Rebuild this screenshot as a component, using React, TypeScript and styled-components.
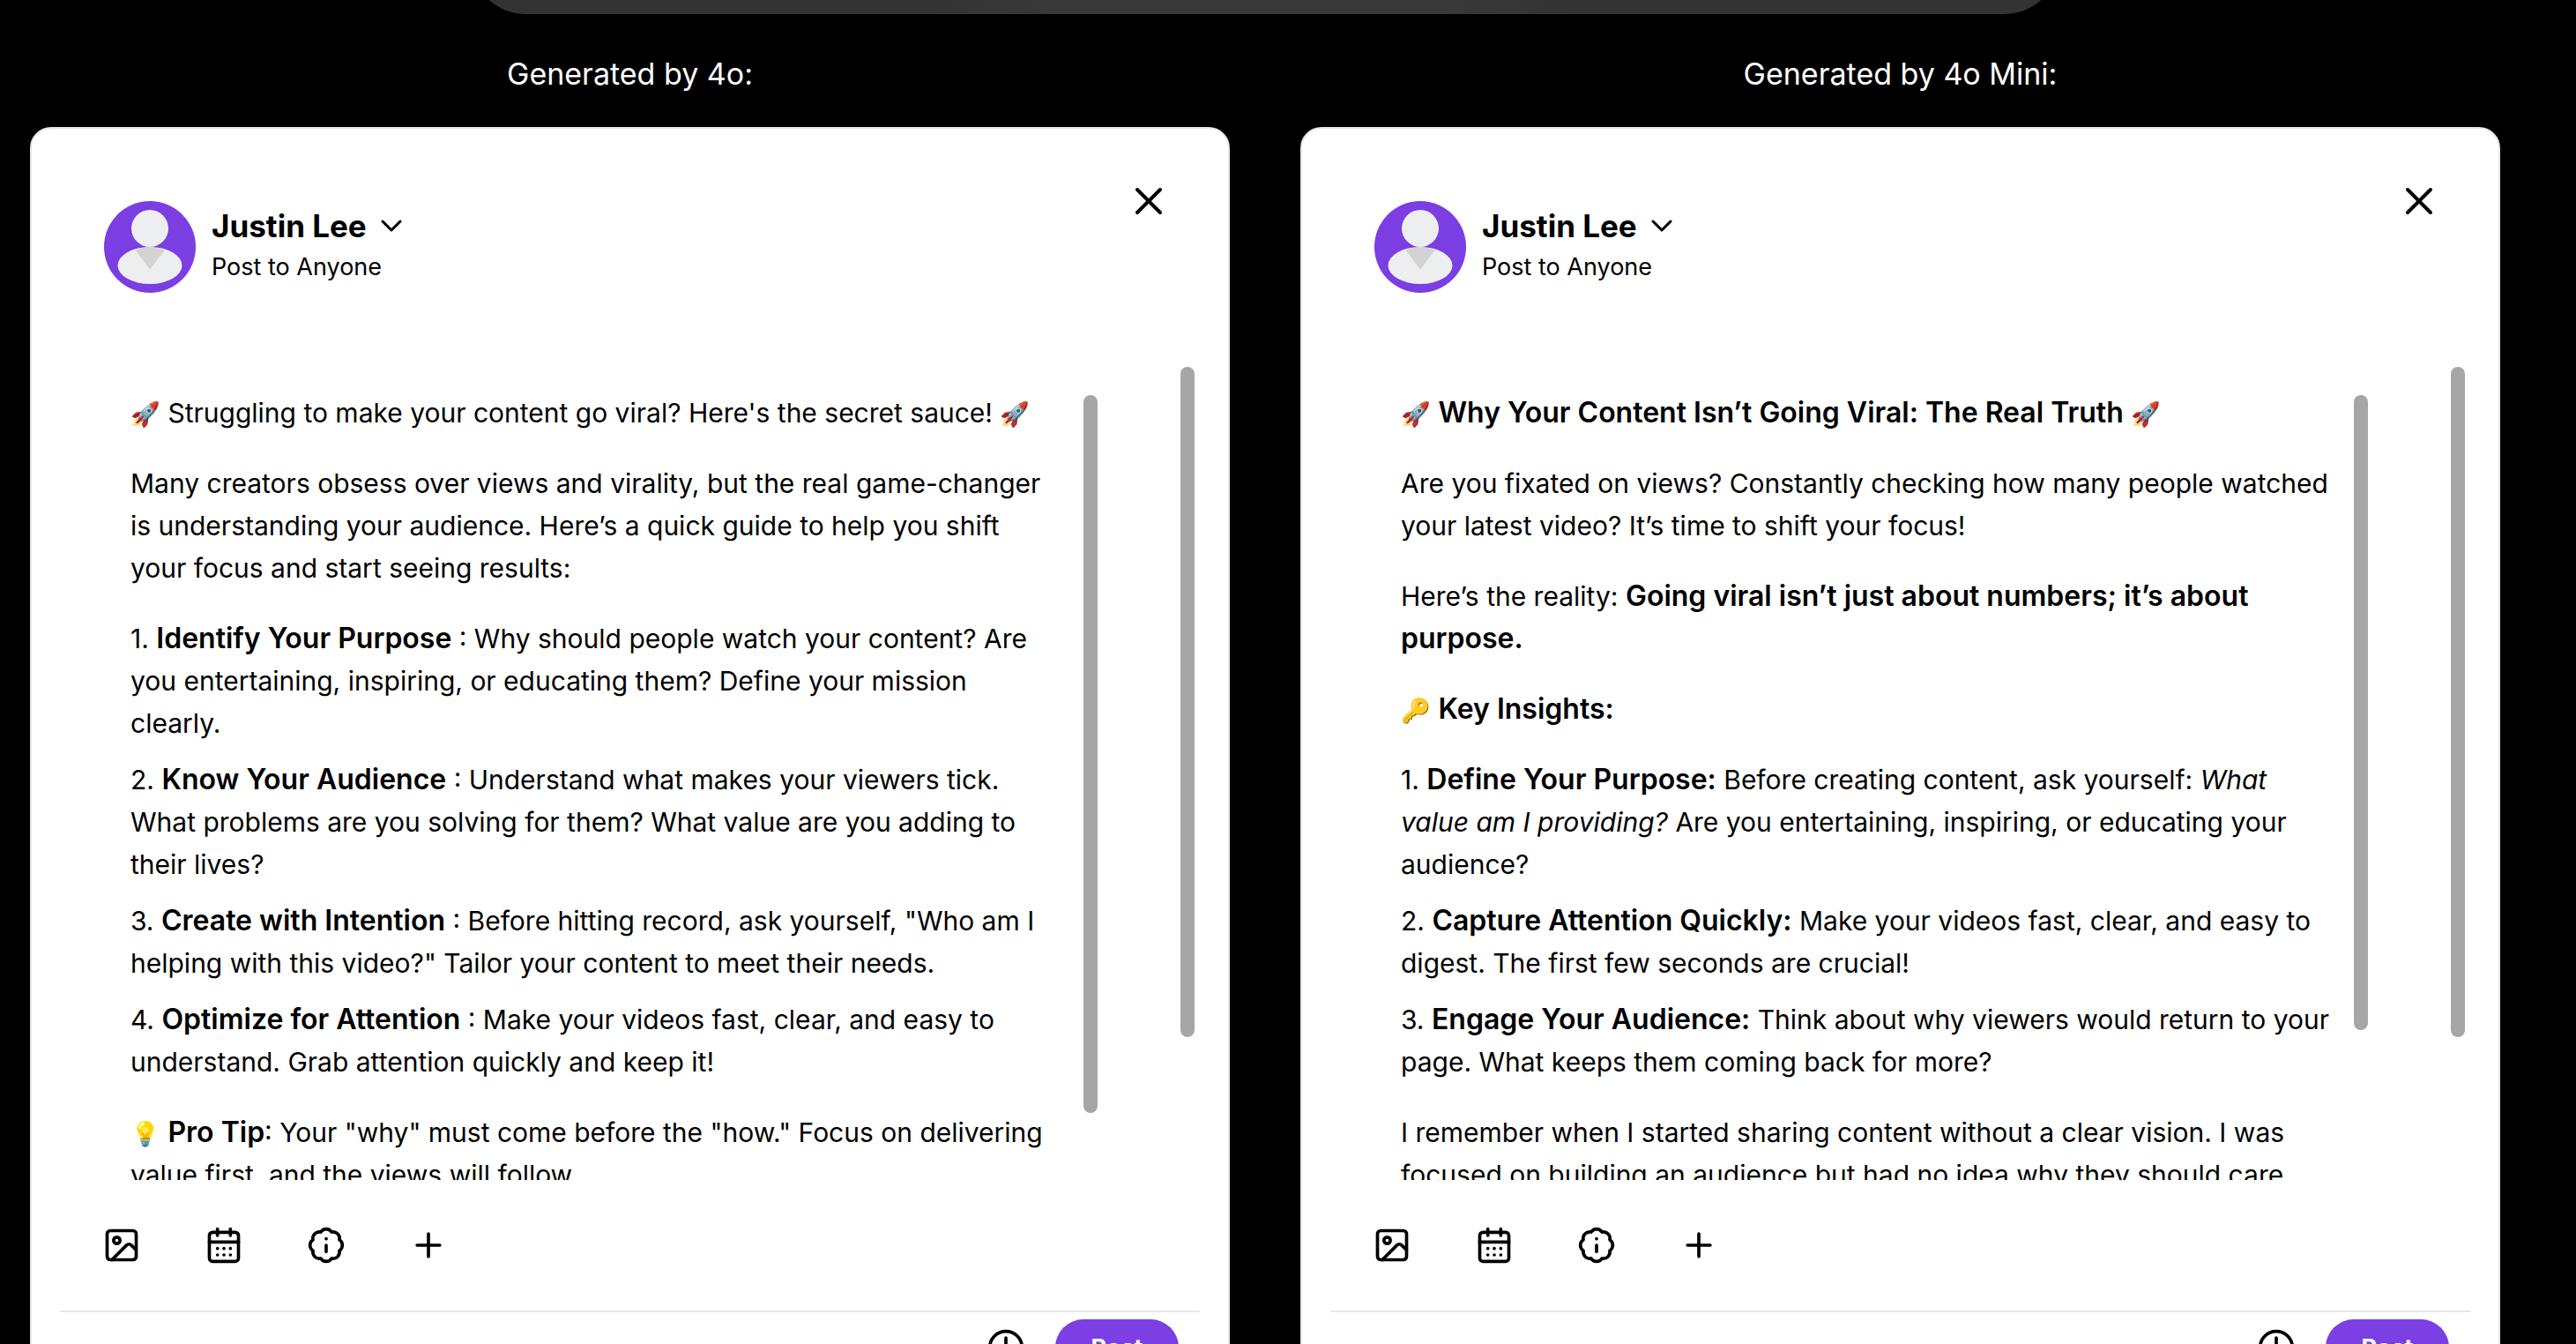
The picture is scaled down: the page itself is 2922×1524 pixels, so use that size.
import React from "react";
import styled, { createGlobalStyle } from "styled-components";
import { BadgeInfo, CalendarDays, Clock, Image, Plus } from "lucide-react";

const GlobalStyle = createGlobalStyle`
  * { box-sizing: border-box; }
  body {
    margin: 0;
    background: #000;
    color: #000;
    font-family: Inter, "Liberation Sans", sans-serif;
  }
  p, h2, ol { margin: 0; padding: 0; }
  button { font: inherit; color: inherit; border: 0; padding: 0; background: none; cursor: pointer; }
`;

const Page = styled.main`
  height: 100vh;
  overflow: hidden;
  display: flex;
  flex-direction: column;
  padding: 0 86px 0 34px;
`;

const PromptBar = styled.div`
  flex: none;
  align-self: center;
  width: 1804px;
  max-width: 100%;
  height: 16px;
  overflow: hidden;
  display: flex;
  align-items: flex-end;
`;

const PromptPill = styled.div`
  flex: 1;
  height: 128px;
  border-radius: 64px;
  background: linear-gradient(90deg, #333 28%, #393939 38%, #393939 60%, #333 70%);
`;

const Columns = styled.div`
  display: grid;
  grid-template-columns: 1fr 1fr;
  column-gap: 80px;
`;

const Column = styled.section`
  min-width: 0;
  padding-top: 40px;
`;

const Heading = styled.h2`
  color: #fff;
  font-size: 34px;
  line-height: 56px;
  font-weight: 400;
  text-align: center;
  margin-bottom: 32px;
`;

const Card = styled.article`
  background: #fff;
  border: 2px solid #e5e7eb;
  border-radius: 24px;
  padding: 32px;
`;

const Header = styled.header`
  display: flex;
  justify-content: space-between;
  align-items: flex-start;
  height: 234px;
  padding: 28px 36px 0 50px;
`;

const Author = styled.div`
  display: flex;
  gap: 18px;
  padding-top: 22px;
`;

const AuthorName = styled.button`
  display: flex;
  align-items: center;
  gap: 10px;
  font-size: 35px;
  line-height: 56px;
  font-weight: 700;
`;

const Audience = styled.p`
  font-size: 27px;
  line-height: 38px;
`;

const CloseButton = styled.button`
  display: flex;
  width: 44px;
  height: 44px;
`;

const Body = styled.div`
  display: flex;
  justify-content: space-between;
  height: 926px;
  padding: 0 6px 0 48px;
`;

const PostArea = styled.div`
  display: flex;
  width: 1129px;
  margin-top: 32px;
  padding-left: 32px;
  overflow: hidden;
`;

const PostText = styled.div`
  flex: 1;
  min-width: 0;
  margin-right: 26px;
  display: flex;
  flex-direction: column;
  gap: 32px;
  font-size: 30px;
  line-height: 48px;
`;

const Steps = styled.ol`
  display: flex;
  flex-direction: column;
  gap: 16px;
  list-style: none;
`;

const Strong = styled.strong`
  font-size: 32px;
  line-height: 1;
  font-weight: 600;
`;

const Emoji = styled.span`
  font-size: 27px;
  line-height: 1;
`;

const Thumb = styled.div<{ $length: number }>`
  flex: none;
  width: 16px;
  height: ${(p) => p.$length}px;
  margin-top: 4px;
  border-radius: 8px;
  background: #a6a6a6;
`;

const Tools = styled.div`
  display: flex;
  align-items: center;
  gap: 72px;
  height: 148px;
  padding-left: 48px;
`;

const IconButton = styled.button`
  display: flex;
`;

const Footer = styled.footer`
  display: flex;
  justify-content: flex-end;
  align-items: center;
  gap: 34px;
  border-top: 2px solid #e5e7eb;
  padding: 8px 24px 0 0;
`;

const PostButton = styled.button`
  width: 140px;
  height: 64px;
  border-radius: 32px;
  background: #7b3fe4;
  color: #fff;
  font-size: 27px;
  font-weight: 700;
`;

const Avatar = () => (
  <svg width="104" height="104" viewBox="0 0 104 104" aria-hidden="true">
    <circle cx="52" cy="52" r="52" fill="#7a3ee3" />
    <circle cx="52" cy="31" r="21" fill="#edeef0" />
    <ellipse cx="52" cy="73" rx="36.5" ry="21" fill="#edeef0" />
    <path d="M35.5 55.5Q52 49 69 55.5L52 77.500Z" fill="#d3d3d3" />
  </svg>
);

type Post = { title: string; body: React.ReactNode; thumb: number };

const posts: Post[] = [
  {
    title: "Generated by 4o:",
    thumb: 814,
    body: (
      <>
        <p>
          <Emoji>🚀</Emoji> Struggling to make your content go viral? Here's the secret sauce!{" "}
          <Emoji>🚀</Emoji>
        </p>
        <p>
          Many creators obsess over views and virality, but the real game-changer is
          understanding your audience. Here’s a quick guide to help you shift your focus and
          start seeing results:
        </p>
        <Steps>
          <li>
            1. <Strong>Identify Your Purpose</Strong> : Why should people watch your content?
            Are you entertaining, inspiring, or educating them? Define your mission clearly.
          </li>
          <li>
            2. <Strong>Know Your Audience</Strong> : Understand what makes your viewers tick.
            What problems are you solving for them? What value are you adding to their lives?
          </li>
          <li>
            3. <Strong>Create with Intention</Strong> : Before hitting record, ask yourself,
            "Who am I helping with this video?" Tailor your content to meet their needs.
          </li>
          <li>
            4. <Strong>Optimize for Attention</Strong> : Make your videos fast, clear, and easy
            to understand. Grab attention quickly and keep it!
          </li>
        </Steps>
        <p>
          <Emoji>💡</Emoji> <Strong>Pro Tip</Strong>: Your "why" must come before the "how."
          Focus on delivering value first, and the views will follow.
        </p>
      </>
    ),
  },
  {
    title: "Generated by 4o Mini:",
    thumb: 720,
    body: (
      <>
        <p>
          <Emoji>🚀</Emoji> <Strong>Why Your Content Isn’t Going Viral: The Real Truth</Strong>{" "}
          <Emoji>🚀</Emoji>
        </p>
        <p>
          Are you fixated on views? Constantly checking how many people watched your latest
          video? It’s time to shift your focus!
        </p>
        <p>
          Here’s the reality:{" "}
          <Strong>Going viral isn’t just about numbers; it’s about purpose.</Strong>
        </p>
        <p>
          <Emoji>🔑</Emoji> <Strong>Key Insights:</Strong>
        </p>
        <Steps>
          <li>
            1. <Strong>Define Your Purpose:</Strong> Before creating content, ask yourself:{" "}
            <em>What value am I providing?</em> Are you entertaining, inspiring, or educating
            your audience?
          </li>
          <li>
            2. <Strong>Capture Attention Quickly:</Strong> Make your videos fast, clear, and
            easy to digest. The first few seconds are crucial!
          </li>
          <li>
            3. <Strong>Engage Your Audience:</Strong> Think about why viewers would return to
            your page. What keeps them coming back for more?
          </li>
        </Steps>
        <p>
          I remember when I started sharing content without a clear vision. I was focused on
          building an audience but had no idea why they should care.
        </p>
      </>
    ),
  },
];

const PostCard = ({ post }: { post: Post }) => (
  <Column>
    <Heading>{post.title}</Heading>
    <Card>
      <Header>
        <Author>
          <Avatar />
          <div>
            <AuthorName type="button">
              Justin Lee
              <svg width="36" height="36" viewBox="0 0 36 36" fill="none" aria-hidden="true">
                <path d="M8 13L18 23L28 13" stroke="#000" strokeWidth="3" strokeLinecap="round" strokeLinejoin="round" />
              </svg>
            </AuthorName>
            <Audience>Post to Anyone</Audience>
          </div>
        </Author>
        <CloseButton type="button" aria-label="Close">
          <svg width="44" height="44" viewBox="0 0 44 44" fill="none" aria-hidden="true">
            <path d="M9 9L35 35M35 9L9 35" stroke="#000" strokeWidth="4" strokeLinecap="round" />
          </svg>
        </CloseButton>
      </Header>
      <Body>
        <PostArea>
          <PostText>{post.body}</PostText>
          <Thumb $length={post.thumb} />
        </PostArea>
        <Thumb $length={760} />
      </Body>
      <Tools>
        <IconButton type="button" aria-label="Add image"><Image size={44} /></IconButton>
        <IconButton type="button" aria-label="Add event"><CalendarDays size={44} /></IconButton>
        <IconButton type="button" aria-label="Celebrate"><BadgeInfo size={44} /></IconButton>
        <IconButton type="button" aria-label="More"><Plus size={44} /></IconButton>
      </Tools>
      <Footer>
        <IconButton type="button" aria-label="Schedule"><Clock size={44} /></IconButton>
        <PostButton type="button">Post</PostButton>
      </Footer>
    </Card>
  </Column>
);

export default function App() {
  return (
    <>
      <GlobalStyle />
      <Page>
        <PromptBar>
          <PromptPill />
        </PromptBar>
        <Columns>
          {posts.map((post) => (
            <PostCard key={post.title} post={post} />
          ))}
        </Columns>
      </Page>
    </>
  );
}
